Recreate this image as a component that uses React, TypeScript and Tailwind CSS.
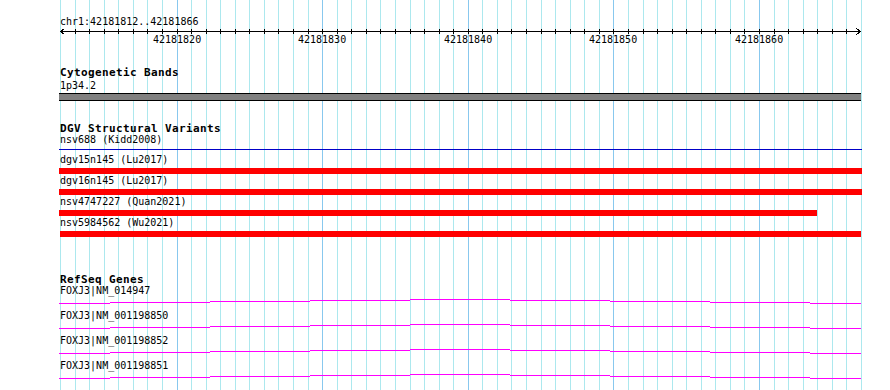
import React from "react"

// 42181812..42181866 spread over x 60..861
const BASES = 55
const scale = 801 / BASES
const gx = (i: number) => Math.round(60 + i * scale)

const ticks = Array.from({ length: BASES + 1 }, (_, i) => i)
const majors = [8, 18, 28, 38, 48]

const dgvRows = [
    { label: "dgv15n145 (Lu2017)", left: 59, width: 803 },
    { label: "dgv16n145 (Lu2017)", left: 59, width: 803 },
    { label: "nsv4747227 (Quan2021)", left: 59, width: 758 },
    { label: "nsv5984562 (Wu2021)", left: 60, width: 801 },
]

const genes = ["FOXJ3|NM_014947", "FOXJ3|NM_001198850", "FOXJ3|NM_001198852", "FOXJ3|NM_001198851"]

// intron "hat" drawn in 100px steps
const breaks = [59, 110, 210, 310, 410, 510, 610, 710, 810, 861]
const levels = [6, 5, 4, 3, 2, 3, 4, 5, 6]

function Grid() {
    return (
        <svg className="absolute inset-0" width={890} height={390} shapeRendering="crispEdges">
            {ticks.map((i) => (
                <rect
                    key={i}
                    x={gx(i)}
                    y={0}
                    width={1}
                    height={390}
                    fill={majors.includes(i) ? "#88c8ee" : "#ace8ee"}
                />
            ))}
        </svg>
    )
}

function Ruler() {
    return (
        <svg className="block" width={890} height={7} shapeRendering="crispEdges">
            <rect x={60} y={3} width={801} height={1} fill="#000" />
            {ticks.slice(1, BASES).map((i) => (
                <rect key={i} x={gx(i)} y={1} width={1} height={5} fill="#000" />
            ))}
            <polyline points="64.5,0.5 60.5,3.5 64.5,6.5" fill="none" stroke="#000" strokeWidth={1} />
            <polyline points="856.5,0.5 860.5,3.5 856.5,6.5" fill="none" stroke="#000" strokeWidth={1} />
        </svg>
    )
}

function GeneLine() {
    return (
        <svg className="block" width={890} height={8} shapeRendering="crispEdges">
            {levels.map((y, k) => (
                <rect key={k} x={breaks[k]} y={y} width={breaks[k + 1] - breaks[k]} height={1} fill="#ff00ff" />
            ))}
        </svg>
    )
}

const title = "pl-[60px] h-[11px] text-[11px] leading-[11px] font-bold tracking-[0.38px]"
const label = "pl-[60px] h-[12px] text-[10px] leading-[12px]"

export default function App() {
    return (
        <div className="relative w-[890px] h-[390px] overflow-hidden bg-white text-black font-['DejaVu_Sans_Mono',monospace]">
            <Grid />
            <div className="relative flex flex-col pt-[15px]">
                <div className="pl-[60px] h-[13px] text-[10px] leading-[13px]">chr1:42181812..42181866</div>
                <Ruler />
                <div className="relative h-[10px] text-[10px] leading-[10px]">
                    {majors.map((i) => (
                        <span key={i} className="absolute top-0 w-[48px] text-center" style={{ left: gx(i) - 24 }}>
                            {42181812 + i}
                        </span>
                    ))}
                </div>

                <div className="mt-[22px] pl-[60px] h-[12px] text-[11px] leading-[12px] font-bold tracking-[0.38px]">
                    Cytogenetic Bands
                </div>
                <div className="pl-[60px] h-[13px] text-[10px] leading-[13px]">1p34.2</div>
                <div className="ml-[59px] mt-[1px] h-[8px] w-[802px] border-y border-black bg-[#808080]" />

                <div className={`mt-[22px] ${title}`}>DGV Structural Variants</div>
                <div className={label}>nsv688 (Kidd2008)</div>
                <div className="ml-[59px] mt-[3px] h-px w-[803px] bg-[#0000c8]" />
                {dgvRows.map((r, k) => (
                    <div key={r.label} className={k === 0 ? "mt-[4px]" : "mt-[1px]"}>
                        <div className={label}>{r.label}</div>
                        <div className="mt-[2px] h-[6px] bg-[#ff0000]" style={{ marginLeft: r.left, width: r.width }} />
                    </div>
                ))}

                <div className={`mt-[37px] ${title}`}>RefSeq Genes</div>
                {genes.map((g, k) => (
                    <div key={g} className={k === 0 ? "" : "mt-[5px]"}>
                        <div className={label}>{g}</div>
                        <GeneLine />
                    </div>
                ))}
            </div>
        </div>
    )
}
